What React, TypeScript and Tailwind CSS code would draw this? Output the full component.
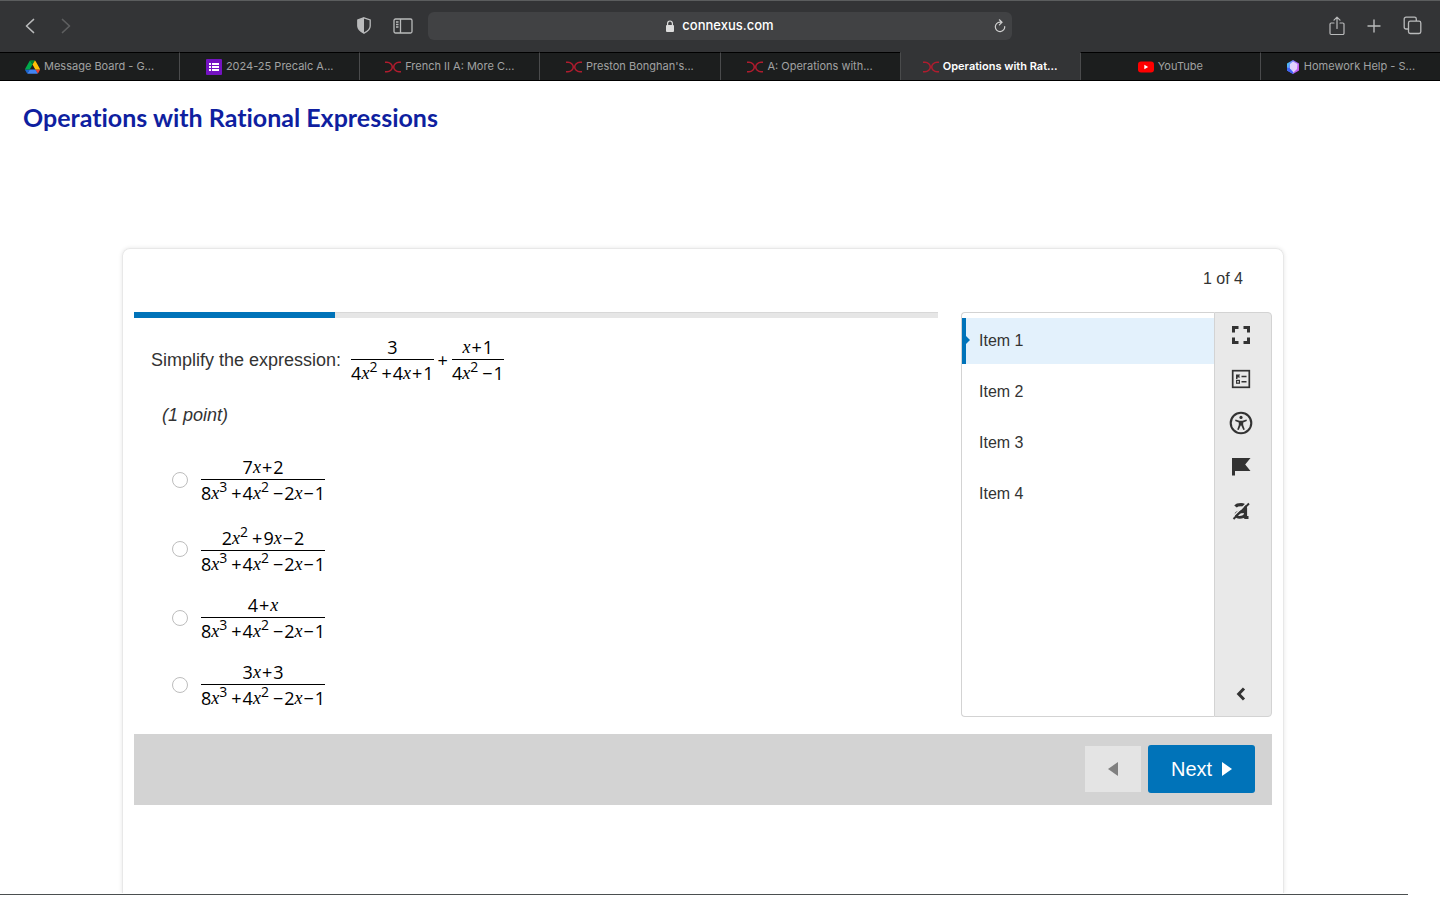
import { useState } from 'react';
import type { ReactNode } from 'react';

const DriveIcon = () => (
  <svg viewBox="0 0 87 78" className="w-[15px] h-[14px] shrink-0" aria-hidden="true">
    <path d="M6.6 66.9l3.9 6.6c.8 1.4 2 2.5 3.3 3.3l13.7-23.8H0c0 1.5.4 3.1 1.2 4.5z" fill="#1967d2" />
    <path d="M43.7 25L29.9 1.2c-1.3.8-2.5 1.9-3.3 3.3L1.2 48.5C.4 49.9 0 51.4 0 53h27.5z" fill="#00a94b" />
    <path d="M73.6 76.8c1.3-.8 2.5-1.9 3.3-3.3l1.6-2.7 7.6-13.3c.8-1.4 1.2-3 1.2-4.5H59.8l5.9 11.5z" fill="#ea4335" />
    <path d="M43.7 25L57.4 1.2C56.1.4 54.5 0 52.9 0H34.4c-1.6 0-3.1.4-4.5 1.2z" fill="#00832d" />
    <path d="M59.8 53H27.5L13.8 76.8c1.3.8 2.9 1.2 4.5 1.2h50.8c1.6 0 3.1-.5 4.5-1.2z" fill="#4285f4" />
    <path d="M73.4 26.5L60.7 4.5c-.8-1.4-1.9-2.5-3.3-3.3L43.7 25l16.1 28h27.5c0-1.5-.4-3.1-1.2-4.5z" fill="#ffc107" />
  </svg>
);

const FormsIcon = () => (
  <svg viewBox="0 0 16 16" className="w-4 h-4 shrink-0" aria-hidden="true">
    <rect width="16" height="16" rx="1" fill="#7413c2" />
    <path d="M3 4h2v2H3zM6 4h7v2H6zM3 7h2v2H3zM6 7h7v2H6zM3 10h2v2H3zM6 10h7v2H6z" fill="#fff" />
  </svg>
);

const ConnexusIcon = () => (
  <svg viewBox="0 0 16 12" className="w-4 h-3 shrink-0" fill="none" stroke="#b01c2e" aria-hidden="true">
    <path d="M0 1.2h2C5 1.2 7.300 3.600 7.300 6S5 10.800 2 10.800H0" strokeWidth="1.500" />
    <path d="M16 1.200h-2C11 1.200 8.700 3.600 8.700 6S11 10.800 14 10.800H16" strokeWidth="1.500" />
  </svg>
);

const YoutubeIcon = () => (
  <svg viewBox="0 0 16 12" className="w-4 h-3 shrink-0" aria-hidden="true">
    <rect y="0.500" width="16" height="11" rx="3" fill="#f00" />
    <path d="M6.300 3.800v4.400L10.200 6z" fill="#fff" />
  </svg>
);

const HexIcon = () => (
  <svg viewBox="0 0 14 14" className="w-[14px] h-[14px] shrink-0" aria-hidden="true">
    <defs>
      <linearGradient id="hex" x1="0" y1="0" x2="1" y2="0.4">
        <stop offset="0" stopColor="#2fe0f0" />
        <stop offset="0.45" stopColor="#7a7bff" />
        <stop offset="1" stopColor="#c45cf0" />
      </linearGradient>
    </defs>
    <path d="M7 0l6 3.400v7.200L7 14 1 10.600V3.400z" fill="url(#hex)" />
    <path d="M1 7.500V10.600L7 14V9z" fill="#3f63f5" />
    <path d="M7 1.500l4.500 2.500-.5 5L7.500 12.500 4 8.500 4 4z" fill="#eee2ff" opacity="0.850" />
  </svg>
);

const TABS: { label: string; icon: ReactNode }[] = [
  { label: 'Message Board - G...', icon: <DriveIcon /> },
  { label: '2024-25 Precalc A...', icon: <FormsIcon /> },
  { label: 'French II A: More C...', icon: <ConnexusIcon /> },
  { label: "Preston Bonghan's...", icon: <ConnexusIcon /> },
  { label: 'A: Operations with...', icon: <ConnexusIcon /> },
  { label: 'Operations with Rat...', icon: <ConnexusIcon /> },
  { label: 'YouTube', icon: <YoutubeIcon /> },
  { label: 'Homework Help - S...', icon: <HexIcon /> },
];

const ACTIVE_TAB = 5;

const ITEMS = ['Item 1', 'Item 2', 'Item 3', 'Item 4'];

const DENOMINATOR = '8x^3+4x^2-2x-1';
const OPTIONS = ['7x+2', '2x^2+9x-2', '4+x', '3x+3'];

// Turns "4x^2+1" into styled runs: italic variables, raised powers, spaced signs
const Expr = ({ value }: { value: string }) => (
  <span className="flex justify-center whitespace-nowrap leading-6">
    {(value.match(/\^\d|\d|x|[+-]/g) ?? []).map((token, i) => {
      if (token[0] === '^') {
        return (
          <sup key={i} className="static block -mt-1 mr-[3px] text-sm leading-5">
            {token[1]}
          </sup>
        );
      }
      if (token === 'x') {
        return (
          <i key={i} className="font-['Liberation_Serif',serif] text-lg leading-6">
            x
          </i>
        );
      }
      if (token === '+' || token === '-') {
        return <span key={i} className="mx-px">{token === '+' ? '+' : '−'}</span>;
      }
      return <span key={i}>{token}</span>;
    })}
  </span>
);

const Fraction = ({ top, bottom }: { top: string; bottom: string }) => (
  <span className="inline-flex flex-col font-['Open_Sans',sans-serif] text-lg text-black">
    <span className={top.includes('^') ? 'pt-1' : ''}>
      <Expr value={top} />
    </span>
    <span className="pt-px border-t border-black">
      <Expr value={bottom} />
    </span>
  </span>
);

const BrowserBar = () => (
  <header className="font-[Inter,sans-serif] bg-[#333436]">
    <div className="grid grid-cols-[1fr_40.5%_1fr] items-center h-[52px] pb-[2px] border-t border-[#5b5d5e] text-[#b9babb]">
      <div className="flex items-center justify-between pl-5 pr-[15px]">
        <div className="flex gap-4">
          <button aria-label="Back" className="w-5 h-5 flex items-center justify-center">
            <svg viewBox="0 0 10 16" className="w-[10px] h-4" fill="none" stroke="currentColor" strokeWidth="1.700" strokeLinecap="round" strokeLinejoin="round">
              <path d="M8.500 1.500L1.500 8l7 6.500" />
            </svg>
          </button>
          <button aria-label="Forward" className="w-5 h-5 flex items-center justify-center text-[#5e5f60]">
            <svg viewBox="0 0 10 16" className="w-[10px] h-4" fill="none" stroke="currentColor" strokeWidth="1.700" strokeLinecap="round" strokeLinejoin="round">
              <path d="M1.500 1.500l7 6.500-7 6.500" />
            </svg>
          </button>
        </div>
        <div className="flex items-center gap-[22px]">
          <button aria-label="Privacy report">
            <svg viewBox="0 0 14 17" className="w-[14px] h-[17px]">
              <path d="M7 .8l6.200 2.200v6c0 3.400-3 5.600-6.200 7.200C3.800 14.600.8 12.400.8 9V3z" fill="none" stroke="currentColor" strokeWidth="1.300" />
              <path d="M7 .8v15.400C3.800 14.600.8 12.400.8 9V3z" fill="currentColor" />
            </svg>
          </button>
          <button aria-label="Show sidebar">
            <svg viewBox="0 0 20 16" className="w-5 h-4" fill="none" stroke="currentColor" strokeWidth="1.300">
              <rect x="1" y="1" width="18" height="14" rx="1.500" />
              <path d="M7.500 1v14M3 4h2.500M3 6.500h2.500M3 9h2.500" />
            </svg>
          </button>
        </div>
      </div>
      <div className="relative flex items-center justify-center gap-2 h-7 rounded-md bg-[#414244] text-[13px] font-medium text-white">
        <svg viewBox="0 0 8 12" className="w-2 h-3" aria-hidden="true">
          <rect y="5" width="8" height="7" rx="1" fill="#dcdcdc" />
          <path d="M1.600 5.500V3.400a2.400 2.400 0 014.800 0v2.100" fill="none" stroke="#dcdcdc" strokeWidth="1.200" />
        </svg>
        <span>connexus.com</span>
        <button aria-label="Reload" className="absolute right-[6px] text-[#d0d0d0]">
          <svg viewBox="0 0 12 14" className="w-3 h-[14px]" fill="none" stroke="currentColor" strokeWidth="1.200" strokeLinecap="round">
            <path d="M10.700 7.500A4.700 4.700 0 1 1 6 3.200h1.800M5.400.8l2.600 2.400-2.600 2.600" />
          </svg>
        </button>
      </div>
      <div className="flex items-center justify-end gap-5 pr-[18px]">
        <button aria-label="Share">
          <svg viewBox="0 0 16 20" className="w-4 h-5" fill="none" stroke="currentColor" strokeWidth="1.200" strokeLinecap="round" strokeLinejoin="round">
            <path d="M5 7H2.200A1.200 1.200 0 001 8.200v9.100a1.200 1.200 0 001.200 1.200h11.600a1.200 1.200 0 001.200-1.200V8.200A1.200 1.200 0 0013.800 7H11M8 12.500V1.500M5 4.200l3-3 3 3" />
          </svg>
        </button>
        <button aria-label="New tab">
          <svg viewBox="0 0 18 18" className="w-[18px] h-[18px]" fill="none" stroke="currentColor" strokeWidth="1.400" strokeLinecap="round">
            <path d="M9 3v12M3 9h12" />
          </svg>
        </button>
        <button aria-label="Tab overview">
          <svg viewBox="0 0 19 19" className="w-[19px] h-[19px]" fill="none" stroke="currentColor" strokeWidth="1.300">
            <path d="M5.500 13H3a1.800 1.800 0 01-1.800-1.800V3A1.800 1.800 0 013 1.200h8.500A1.800 1.800 0 0113.300 3v2" />
            <rect x="5.500" y="5.200" width="12.300" height="12.300" rx="1.800" />
          </svg>
        </button>
      </div>
    </div>
    <nav className="flex h-[29px] border-b border-black text-[11px]">
      {TABS.map((tab, i) => (
        <a
          key={tab.label}
          href="#"
          className={`flex flex-1 items-center justify-center gap-1 border-t whitespace-nowrap ${
            i > 0 ? 'border-l border-l-[#4a4b4c]' : ''
          } ${
            i === ACTIVE_TAB
              ? 'border-t-[#333436] bg-[#333436] font-semibold text-white'
              : 'border-t-black bg-[#1c1e1e] text-[#a1a2a2]'
          }`}
        >
          {tab.icon}
          <span>{tab.label}</span>
        </a>
      ))}
    </nav>
  </header>
);

const ToolRail = () => (
  <div className="flex flex-col items-center gap-5 w-[58px] pt-[10px] pb-[10px] pr-1 bg-[#e9e9e9] border border-[#d3d3d3] rounded-r-sm text-[#333]">
    <button aria-label="Full screen">
      <svg viewBox="0 0 24 24" className="w-6 h-6" fill="none" stroke="currentColor" strokeWidth="3">
        <path d="M4.500 9.500v-5h5M14.500 4.500h5v5M19.500 14.500v5h-5M9.500 19.500h-5v-5" />
      </svg>
    </button>
    <button aria-label="Item list">
      <svg viewBox="0 0 24 24" className="w-6 h-6" fill="none" stroke="currentColor">
        <rect x="3.700" y="3.700" width="16.600" height="16.600" strokeWidth="1.700" />
        <path d="M12.500 9.500h5M12.500 14.800h5" strokeWidth="1.600" />
        <path d="M7 12V7.500h4.200l-1 1.500 1 1.500H8.500V12z" fill="currentColor" stroke="none" />
        <rect x="7.600" y="13.400" width="2.800" height="2.800" strokeWidth="1.200" />
      </svg>
    </button>
    <button aria-label="Accessibility">
      <svg viewBox="0 0 24 24" className="w-6 h-6">
        <circle cx="12" cy="12" r="10.300" fill="none" stroke="currentColor" strokeWidth="2.100" />
        <circle cx="12" cy="6.400" r="1.600" fill="currentColor" />
        <path d="M6.500 8.600l4 1.100h3l4-1.100.4 1.300-3.700 1.500v2.600l1.600 4.600-1.500.5-2-4.600h-.6l-2 4.600-1.500-.5 1.600-4.600v-2.600l-3.700-1.500z" fill="currentColor" />
      </svg>
    </button>
    <button aria-label="Flag item">
      <svg viewBox="0 0 24 24" className="w-6 h-6" fill="currentColor">
        <path d="M3 3h18.500l-5.300 6.500 5.300 6.500H6v4.500H3z" />
      </svg>
    </button>
    <button aria-label="Eliminate answers">
      <svg viewBox="0 0 24 24" className="w-6 h-6" fill="none" stroke="currentColor">
        <path d="M6.500 7.500C8 5.600 16.500 4 16.500 9v10.500" strokeWidth="3.200" />
        <path d="M16 12.500c-5 0-9 .5-9 3.500 0 3.500 7 3 9 0M15.500 18.500h4" strokeWidth="2.800" />
        <path d="M2.500 19L19 3" stroke="#e9e9e9" strokeWidth="1.500" />
        <path d="M4.500 20L20 4.500" strokeWidth="1.900" />
      </svg>
    </button>
    <button aria-label="Collapse panel" className="mt-auto">
      <svg viewBox="0 0 24 24" className="w-6 h-6" fill="none" stroke="currentColor" strokeWidth="3">
        <path d="M15 6.500L9.700 12l5.300 5.500" />
      </svg>
    </button>
  </div>
);

export default function App() {
  const [answer, setAnswer] = useState<string | null>(null);
  const [item, setItem] = useState(0);

  return (
    <div className="flex flex-col h-screen overflow-hidden bg-white font-['Liberation_Sans',Arial,sans-serif] text-[#333]">
      <BrowserBar />

      <main className="flex flex-col flex-1 min-h-0">
        <h1 className="px-[23px] pt-[19px] font-[Lato,sans-serif] text-[25px] leading-[34px] font-bold text-[#0f1fa0] [font-variant-ligatures:none]">
          Operations with Rational Expressions
        </h1>

        <div className="flex flex-1 min-h-0 overflow-hidden pt-[114px] pl-[122px] pr-[156px]">
          <section className="flex-1 px-[11px] border border-b-0 border-[#e8e8e8] rounded-t-lg shadow-[0_0_4px_rgba(0,0,0,0.100)]">
            <p className="pt-[18px] pr-[29px] pb-[21px] text-right text-base">1 of 4</p>

            <div className="flex gap-[23px]">
              {/* Question */}
              <div className="flex-1">
                <div className="h-[6px] bg-[#e6e6e6] border-t border-[#d8d8d8]">
                  <div className="-mt-px w-1/4 h-[6px] bg-[#0073b9]" />
                </div>
                <div className="flex items-center pt-[17px] pl-[17px] text-lg">
                  <span className="mr-[10px]">Simplify the expression:</span>
                  <Fraction top="3" bottom="4x^2+4x+1" />
                  <span className="mx-1 font-['Open_Sans',sans-serif] text-black">+</span>
                  <Fraction top="x+1" bottom="4x^2-1" />
                </div>
                <p className="pt-4 pl-7 text-lg italic">(1 point)</p>

                <div className="flex flex-col items-start gap-[17px] pt-[26px] pl-[38px]">
                  {OPTIONS.map((option) => (
                    <label key={option} className="flex items-center gap-[13px]">
                      <input
                        type="radio"
                        name="answer"
                        checked={answer === option}
                        onChange={() => setAnswer(option)}
                        className="appearance-none w-4 h-4 rounded-full border border-[#bdbdbd] bg-white checked:border-[5px] checked:border-[#0073b9]"
                      />
                      <Fraction top={option} bottom={DENOMINATOR} />
                    </label>
                  ))}
                </div>
              </div>

              {/* Item navigation */}
              <aside className="flex w-[311px] h-[405px]">
                <div className="flex flex-col flex-1 gap-[5px] pt-[5px] border border-r-0 border-[#d3d3d3] rounded-l-sm">
                  {ITEMS.map((label, i) => (
                    <button
                      key={label}
                      onClick={() => setItem(i)}
                      className={`relative h-[46px] pl-[13px] border-l-4 text-left text-base ${
                        i === item ? 'border-[#0073b9] bg-[#e3f1fc]' : 'border-transparent'
                      }`}
                    >
                      {i === item && (
                        <svg viewBox="0 0 4 8" className="absolute left-0 top-[18px] w-1 h-2" aria-hidden="true">
                          <path d="M0 0l4 4-4 4z" fill="#0073b9" />
                        </svg>
                      )}
                      {label}
                    </button>
                  ))}
                </div>
                <ToolRail />
              </aside>
            </div>

            <div className="flex items-center justify-end gap-[7px] h-[71px] mt-[17px] pr-[17px] pb-[2px] bg-[#d3d3d3]">
              <button aria-label="Previous" className="flex items-center justify-center w-14 h-[46px] bg-[#e4e4e4] text-[#808080]">
                <svg viewBox="0 0 10 14" className="w-[10px] h-[14px]" fill="currentColor">
                  <path d="M10 0v14L0 7z" />
                </svg>
              </button>
              <button className="flex items-center justify-center gap-[10px] w-[107px] h-12 rounded-[3px] bg-[#0073b9] text-xl text-white">
                Next
                <svg viewBox="0 0 10 14" className="w-[10px] h-[14px]" fill="currentColor" aria-hidden="true">
                  <path d="M0 0v14l10-7z" />
                </svg>
              </button>
            </div>
          </section>
        </div>

        <div className="mr-8 mb-[5px] mt-px border-t border-[#4b4f50]" />
      </main>
    </div>
  );
}
